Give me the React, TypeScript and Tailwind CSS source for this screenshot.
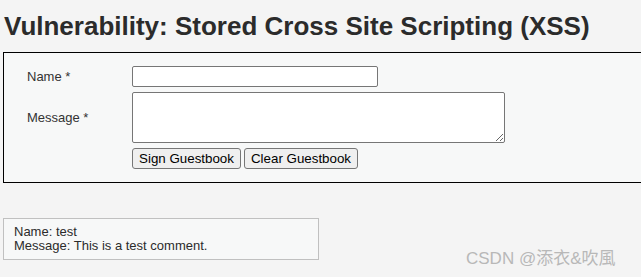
export default function App() {
  return (
    <div className="relative min-h-screen w-full overflow-hidden bg-[#f4f4f4] pl-[3px] pt-[11px] font-['Liberation_Sans',Arial,sans-serif] text-[13px] text-[#333]">
      <h1 className="pl-px text-[26px] font-bold leading-[30px] text-[#2b2b2b]">
        Vulnerability: Stored Cross Site Scripting (XSS)
      </h1>

      {/* vulnerable code area */}
      <div className="mt-[11px] w-[700px] border border-black bg-[#f7f8f8] pb-[13px] pl-[23px] pt-[13px]">
        <div className="grid grid-cols-[105px_auto] items-center gap-y-[5px]">
          <label className="leading-[15px]">Name *</label>
          <input
            type="text"
            className="h-[21px] w-[246px] rounded-[2px] border border-[#767676] bg-white px-[2px] text-[13px] outline-none"
          />
          <label className="leading-[15px]">Message *</label>
          <textarea className="block h-[51px] w-[373px] rounded-[2px] border border-[#767676] bg-white px-[2px] text-[13px] outline-none" />
          <div />
          <div className="flex gap-[3px]">
            <button className="h-[21px] w-[109px] rounded-[3px] border border-[#767676] bg-[#efefef] text-[13.33px] leading-[15px] text-black">
              Sign Guestbook
            </button>
            <button className="h-[21px] w-[114px] rounded-[3px] border border-[#767676] bg-[#efefef] text-[13.33px] leading-[15px] text-black">
              Clear Guestbook
            </button>
          </div>
        </div>
      </div>

      {/* guestbook entries */}
      <div className="mt-[35px] w-[316px] border border-[#c0c0c0] bg-[#f7f8f8] pb-[6px] pl-[10px] pt-[6px] leading-[14px] text-[#2b2b2b]">
        <div>Name: test</div>
        <div>Message: This is a test comment.</div>
      </div>

      <div className="absolute left-[466px] top-[249px] font-['Liberation_Sans','Noto_Sans_CJK_SC',sans-serif] text-[17px] leading-[20px] text-[#b8b8b8]">
        CSDN @添衣&amp;吹風
      </div>
    </div>
  );
}
